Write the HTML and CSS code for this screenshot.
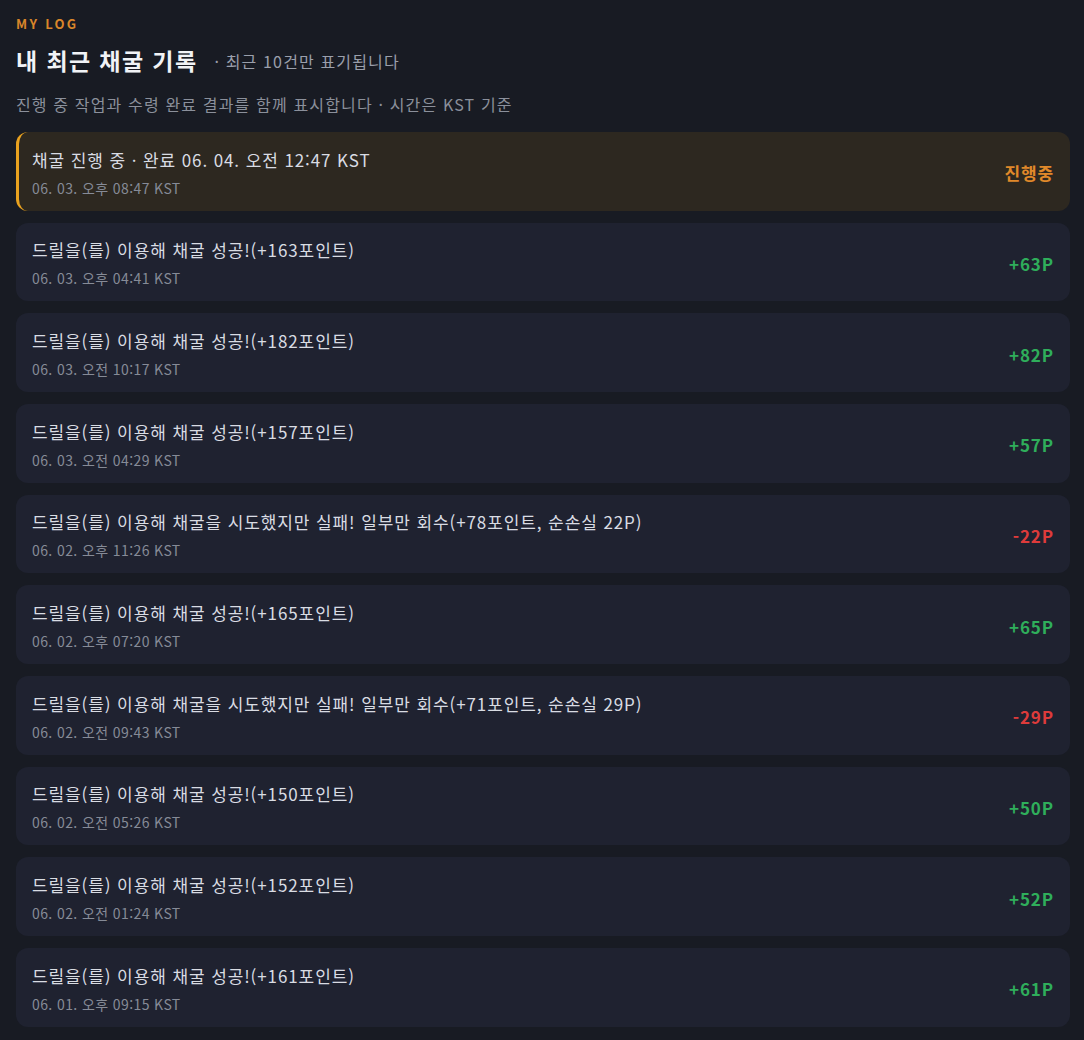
FILE: index.html
```html
<!DOCTYPE html>
<html lang="ko">
<head>
<meta charset="utf-8">
<title>MY LOG</title>
<link rel="stylesheet" href="styles.css">
</head>
<body>
<main class="page">
  <div class="eyebrow">MY LOG</div>
  <div class="title-row">
    <h1 class="title">내 최근 채굴 기록</h1>
    <span class="subtitle">· 최근 10건만 표기됩니다</span>
  </div>
  <p class="desc">진행 중 작업과 수령 완료 결과를 함께 표시합니다 · 시간은 KST 기준</p>
  <ul class="list">
    <li class="card card-active">
      <div class="info"><div class="msg">채굴 진행 중 · 완료 06. 04. 오전 12:47 KST</div><div class="date">06. 03. 오후 08:47 KST</div></div>
      <div class="amount pending">진행중</div>
    </li>
    <li class="card">
      <div class="info"><div class="msg">드릴을(를) 이용해 채굴 성공!(+163포인트)</div><div class="date">06. 03. 오후 04:41 KST</div></div>
      <div class="amount plus">+63P</div>
    </li>
    <li class="card">
      <div class="info"><div class="msg">드릴을(를) 이용해 채굴 성공!(+182포인트)</div><div class="date">06. 03. 오전 10:17 KST</div></div>
      <div class="amount plus">+82P</div>
    </li>
    <li class="card">
      <div class="info"><div class="msg">드릴을(를) 이용해 채굴 성공!(+157포인트)</div><div class="date">06. 03. 오전 04:29 KST</div></div>
      <div class="amount plus">+57P</div>
    </li>
    <li class="card">
      <div class="info"><div class="msg">드릴을(를) 이용해 채굴을 시도했지만 실패! 일부만 회수(+78포인트, 순손실 22P)</div><div class="date">06. 02. 오후 11:26 KST</div></div>
      <div class="amount minus">-22P</div>
    </li>
    <li class="card">
      <div class="info"><div class="msg">드릴을(를) 이용해 채굴 성공!(+165포인트)</div><div class="date">06. 02. 오후 07:20 KST</div></div>
      <div class="amount plus">+65P</div>
    </li>
    <li class="card">
      <div class="info"><div class="msg">드릴을(를) 이용해 채굴을 시도했지만 실패! 일부만 회수(+71포인트, 순손실 29P)</div><div class="date">06. 02. 오전 09:43 KST</div></div>
      <div class="amount minus">-29P</div>
    </li>
    <li class="card">
      <div class="info"><div class="msg">드릴을(를) 이용해 채굴 성공!(+150포인트)</div><div class="date">06. 02. 오전 05:26 KST</div></div>
      <div class="amount plus">+50P</div>
    </li>
    <li class="card">
      <div class="info"><div class="msg">드릴을(를) 이용해 채굴 성공!(+152포인트)</div><div class="date">06. 02. 오전 01:24 KST</div></div>
      <div class="amount plus">+52P</div>
    </li>
    <li class="card">
      <div class="info"><div class="msg">드릴을(를) 이용해 채굴 성공!(+161포인트)</div><div class="date">06. 01. 오후 09:15 KST</div></div>
      <div class="amount plus">+61P</div>
    </li>
  </ul>
</main>
</body>
</html>
```

FILE: styles.css
```css
* { box-sizing: border-box; }
html, body {
  margin: 0;
  padding: 0;
  background: #181b23;
}
body {
  font-family: "Noto Sans CJK KR", "Noto Sans", sans-serif;
  color: #d8dbe2;
}
.page {
  padding: 16px 14px 12px 16px;
}
.eyebrow {
  font-size: 13px;
  line-height: 16px;
  font-weight: 700;
  letter-spacing: 2.3px;
  color: #d9862a;
}
.title-row {
  display: flex;
  align-items: center;
  margin-top: 13px;
}
.title {
  margin: 0;
  font-size: 23px;
  line-height: 30px;
  font-weight: 700;
  letter-spacing: 1.4px;
  color: #f1f3f6;
}
.subtitle {
  margin-left: 17px;
  font-size: 16px;
  line-height: 22px;
  letter-spacing: 1.15px;
  color: #9a9fab;
  margin-top: 2px;
}
.desc {
  margin: 18px 0 0;
  font-size: 16px;
  line-height: 22px;
  letter-spacing: 1.15px;
  color: #8b909b;
}
.list {
  list-style: none;
  margin: 17px 0 0;
  padding: 0;
  display: flex;
  flex-direction: column;
  gap: 12px;
}
.card {
  display: flex;
  align-items: center;
  justify-content: space-between;
  height: 78.67px;
  padding: 0 16px;
  border-radius: 12px;
  background: #1f2230;
}
.card-active {
  background: #2d2820;
  border-left: 3px solid #e9a21f;
  padding-left: 13px;
}
.info {
  display: flex;
  flex-direction: column;
}
.msg {
  font-size: 17px;
  line-height: 24px;
  letter-spacing: 0.9px;
  color: #d9dce3;
  margin-top: 2px;
}
.date {
  margin-top: 7px;
  font-size: 14px;
  line-height: 18px;
  letter-spacing: 0.4px;
  color: #868b97;
}
.amount {
  font-size: 17px;
  font-weight: 700;
  line-height: 24px;
  letter-spacing: 0.9px;
  margin-top: 4px;
}
.pending { color: #e0892a; }
.plus { color: #2fae5b; }
.minus { color: #de3b3b; }
```
